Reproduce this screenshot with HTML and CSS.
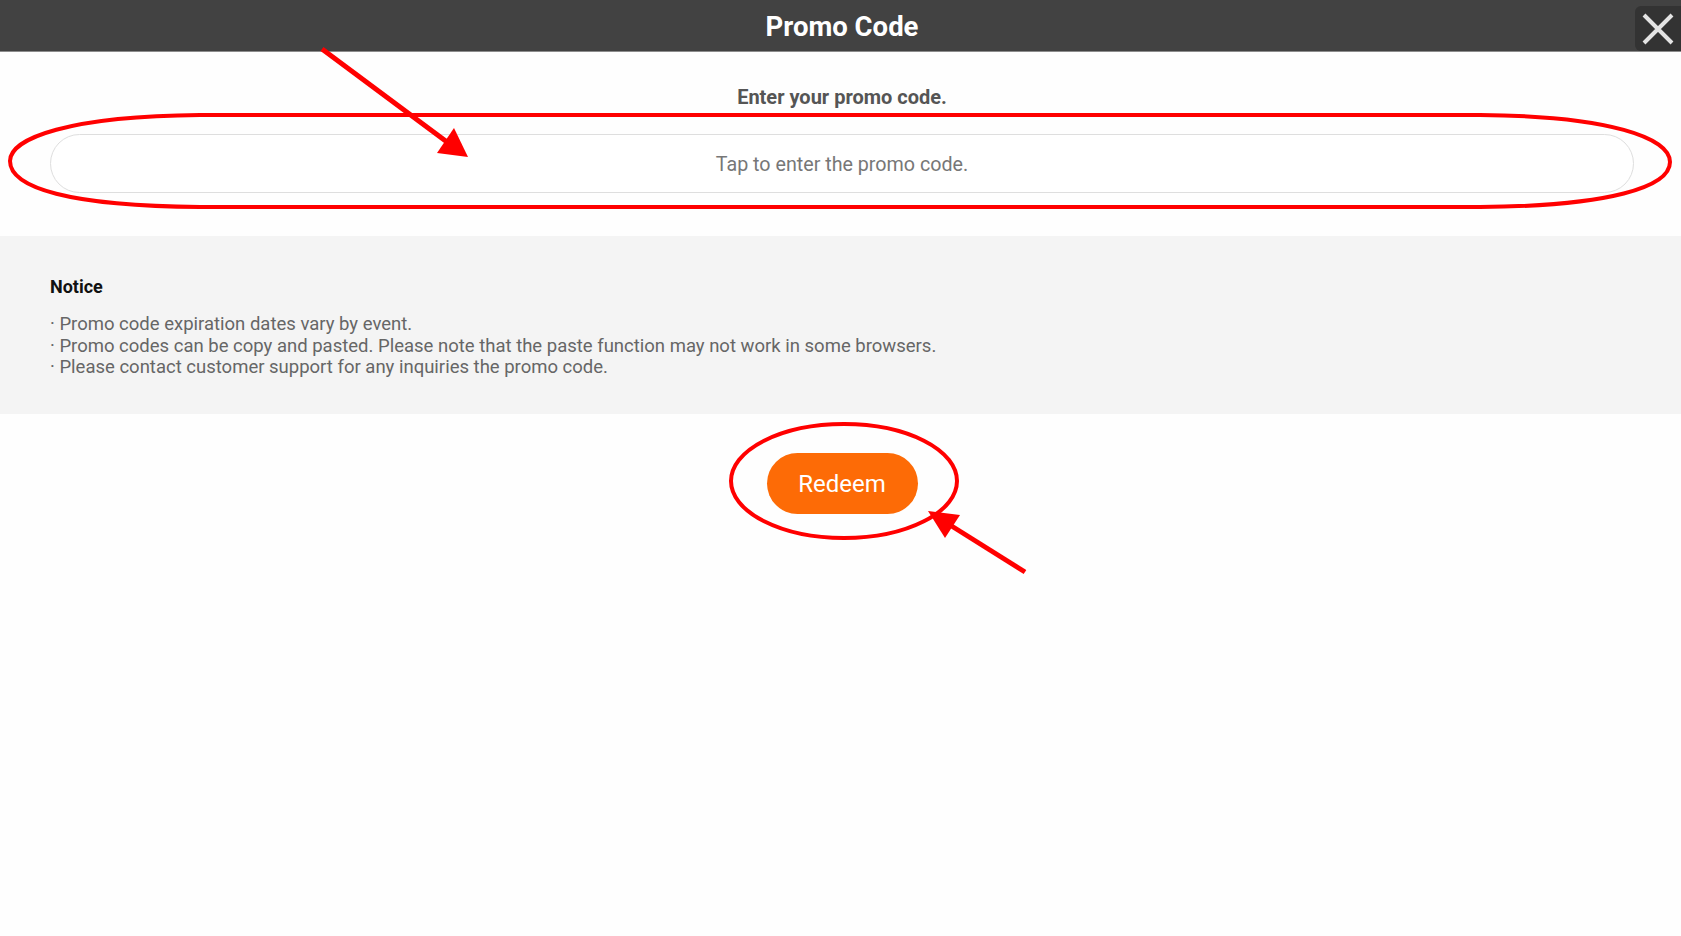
FILE: index.html
```html
<!DOCTYPE html>
<html lang="en">
<head>
<meta charset="utf-8">
<title>Promo Code</title>
<link rel="stylesheet" href="styles.css">
</head>
<body>
<div class="page">
  <header class="topbar">
    <h1 class="title">Promo Code</h1>
    <button class="close" aria-label="Close">
      <svg width="46" height="45" viewBox="0 0 46 45"><path d="M9 9 L37 37 M37 9 L9 37" stroke="#e4e4e4" stroke-width="4" fill="none"/></svg>
    </button>
  </header>

  <section class="entry">
    <p class="prompt">Enter your promo code.</p>
    <div class="field">Tap to enter the promo code.</div>
  </section>

  <section class="notice">
    <h2 class="notice-title">Notice</h2>
    <ul class="notice-list">
      <li>· Promo code expiration dates vary by event.</li>
      <li>· Promo codes can be copy and pasted. Please note that the paste function may not work in some browsers.</li>
      <li>· Please contact customer support for any inquiries the promo code.</li>
    </ul>
  </section>

  <div class="actions">
    <button class="redeem">Redeem</button>
  </div>

  <svg class="marks" width="1681" height="936" viewBox="0 0 1681 936">
    <path d="M200 115 L1480 115 C1610 116 1670 138 1670 162 C1670 187 1610 206 1480 207 L200 207 C70 206 10 188 10 161 C10 138 70 116 200 115 Z" fill="none" stroke="#ff0000" stroke-width="4"/>
    <line x1="322" y1="49" x2="447" y2="142" stroke="#ff0000" stroke-width="5"/>
    <polygon points="454,128 437,153 468,157" fill="#ff0000"/>
    <ellipse cx="844" cy="481" rx="113" ry="57" fill="none" stroke="#ff0000" stroke-width="4"/>
    <line x1="1025" y1="572" x2="950" y2="525" stroke="#ff0000" stroke-width="5"/>
    <polygon points="928,511 960,515 945,538" fill="#ff0000"/>
  </svg>
</div>
</body>
</html>
```

FILE: styles.css
```css
* { box-sizing: border-box; }

html, body {
  margin: 0;
  padding: 0;
  background: #fefefe;
  font-family: Roboto, "Liberation Sans", Arial, sans-serif;
}

.page {
  position: relative;
  width: 1681px;
  min-height: 936px;
}

.topbar {
  position: relative;
  height: 52px;
  background: #424242;
  border-bottom: 1px solid #8c8c8c;
  display: flex;
  align-items: center;
  justify-content: center;
}

.title {
  margin: 0;
  color: #ffffff;
  font-size: 27.5px;
  font-weight: 700;
  line-height: 51px;
  padding-top: 2px;
  padding-left: 3px;
}

.close {
  position: absolute;
  top: 6px;
  right: 0;
  width: 46px;
  height: 45px;
  padding: 0;
  border: none;
  border-radius: 6px 0 0 6px;
  background: #333333;
  display: flex;
  align-items: center;
  justify-content: center;
}

.close svg { display: block; }

.entry {
  padding: 33px 47px 0 50px;
  display: flex;
  flex-direction: column;
  align-items: stretch;
}

.prompt {
  margin: 0;
  text-align: center;
  font-size: 20px;
  font-weight: 700;
  line-height: 24px;
  color: #555555;
}

.field {
  margin-top: 25px;
  height: 59px;
  padding-top: 2px;
  border: 1px solid #dedede;
  border-radius: 30px;
  background: #ffffff;
  display: flex;
  align-items: center;
  justify-content: center;
  font-size: 19.7px;
  color: #777777;
}

.notice {
  margin-top: 43px;
  background: #f4f4f4;
  padding: 41px 50px 34px 50px;
  height: 178px;
}

.notice-title {
  margin: 0;
  font-size: 18px;
  font-weight: 700;
  line-height: 20px;
  color: #111111;
}

.notice-list {
  list-style: none;
  margin: 17px 0 0 0;
  padding: 0;
  font-size: 18.5px;
  line-height: 21.5px;
  color: #666666;
}

.actions {
  display: flex;
  justify-content: center;
  padding-top: 39px;
  padding-left: 3px;
}

.redeem {
  width: 151px;
  height: 61px;
  border: none;
  border-radius: 31px;
  background: #fd6b06;
  color: #ffffff;
  font-family: Roboto, "Liberation Sans", Arial, sans-serif;
  font-size: 24px;
  font-weight: 400;
  padding: 0;
}

.marks {
  position: absolute;
  left: 0;
  top: 0;
  pointer-events: none;
}
```
